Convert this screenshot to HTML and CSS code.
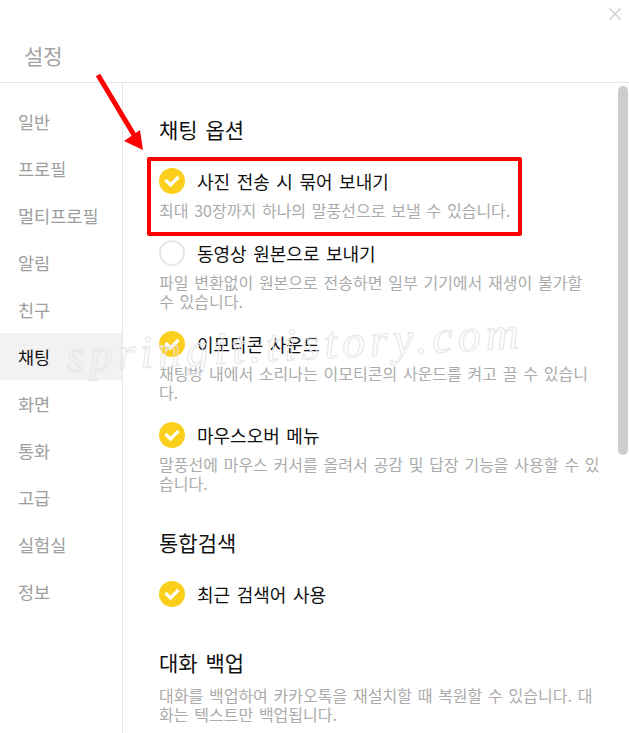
FILE: index.html
```html
<!DOCTYPE html>
<html lang="ko">
<head>
    <meta charset="UTF-8">
    <meta name="viewport" content="width=device-width, initial-scale=1.0">
    <title>설정</title>
    <link rel="stylesheet" href="styles.css">
</head>
<body>
    <div class="window">
        <header class="top-bar">
            <h1 class="title">설정</h1>
            <button class="close-btn" aria-label="닫기">
                <svg width="12" height="12" viewBox="0 0 12 12"><path d="M0.5 0.5L11.5 11.5M11.5 0.5L0.5 11.5" stroke="#c8c8c8" stroke-width="1.2"/></svg>
            </button>
        </header>

        <div class="main">
            <nav class="side-menu">
                <a class="menu-item">일반</a>
                <a class="menu-item">프로필</a>
                <a class="menu-item">멀티프로필</a>
                <a class="menu-item">알림</a>
                <a class="menu-item">친구</a>
                <a class="menu-item active">채팅</a>
                <a class="menu-item">화면</a>
                <a class="menu-item">통화</a>
                <a class="menu-item">고급</a>
                <a class="menu-item">실험실</a>
                <a class="menu-item">정보</a>
            </nav>

            <div class="content">
                <section class="section">
                    <h2 class="section-title">채팅 옵션</h2>

                    <div class="option highlighted">
                        <div class="option-row">
                            <svg class="check" viewBox="0 0 26 26"><circle cx="13" cy="13" r="13" fill="#fccf1d"/><path d="M6.5 12L11.5 17L19.5 9" stroke="#fff" stroke-width="3.2" fill="none"/></svg>
                            <span class="option-label">사진 전송 시 묶어 보내기</span>
                        </div>
                        <p class="option-desc">최대 30장까지 하나의 말풍선으로 보낼 수 있습니다.</p>
                    </div>

                    <div class="option">
                        <div class="option-row">
                            <svg class="check" viewBox="0 0 26 26"><circle cx="13" cy="13" r="12" fill="none" stroke="#e8e8e8" stroke-width="2"/></svg>
                            <span class="option-label">동영상 원본으로 보내기</span>
                        </div>
                        <p class="option-desc">파일 변환없이 원본으로 전송하면 일부 기기에서 재생이 불가할 수 있습니다.</p>
                    </div>

                    <div class="option">
                        <div class="option-row">
                            <svg class="check" viewBox="0 0 26 26"><circle cx="13" cy="13" r="13" fill="#fccf1d"/><path d="M6.5 12L11.5 17L19.5 9" stroke="#fff" stroke-width="3.2" fill="none"/></svg>
                            <span class="option-label">이모티콘 사운드</span>
                        </div>
                        <p class="option-desc">채팅방 내에서 소리나는 이모티콘의 사운드를 켜고 끌 수 있습니다.</p>
                    </div>

                    <div class="option">
                        <div class="option-row">
                            <svg class="check" viewBox="0 0 26 26"><circle cx="13" cy="13" r="13" fill="#fccf1d"/><path d="M6.5 12L11.5 17L19.5 9" stroke="#fff" stroke-width="3.2" fill="none"/></svg>
                            <span class="option-label">마우스오버 메뉴</span>
                        </div>
                        <p class="option-desc">말풍선에 마우스 커서를 올려서 공감 및 답장 기능을 사용할 수 있습니다.</p>
                    </div>
                </section>

                <section class="section">
                    <h2 class="section-title">통합검색</h2>
                    <div class="option">
                        <div class="option-row">
                            <svg class="check" viewBox="0 0 26 26"><circle cx="13" cy="13" r="13" fill="#fccf1d"/><path d="M6.5 12L11.5 17L19.5 9" stroke="#fff" stroke-width="3.2" fill="none"/></svg>
                            <span class="option-label">최근 검색어 사용</span>
                        </div>
                    </div>
                </section>

                <section class="section section-backup">
                    <h2 class="section-title">대화 백업</h2>
                    <p class="section-desc">대화를 백업하여 카카오톡을 재설치할 때 복원할 수 있습니다. 대화는 텍스트만 백업됩니다.</p>
                </section>

                <div class="scroll-thumb"></div>
            </div>
        </div>

        <!-- blog watermark + annotation arrow -->
        <div class="watermark">springit.tistory.com</div>
        <svg class="pointer" width="80" height="100" viewBox="0 0 80 100">
            <line x1="18" y1="15" x2="54" y2="75" stroke="#ff0000" stroke-width="5"/>
            <polygon points="63,90 44,81 60,70" fill="#ff0000"/>
        </svg>
    </div>
</body>
</html>
```

FILE: styles.css
```css
* {
    margin: 0;
    padding: 0;
    box-sizing: border-box;
}

body {
    font-family: "Noto Sans CJK KR", "Noto Sans", sans-serif;
    background: #ffffff;
    color: #1a1a1a;
    width: 629px;
    height: 733px;
    overflow: hidden;
}

.window {
    position: relative;
    height: 733px;
    display: flex;
    flex-direction: column;
}

.top-bar {
    height: 83px;
    border-bottom: 1px solid #e6e6e6;
    display: flex;
    align-items: center;
    padding: 28px 0 0 24px;
}

.title {
    font-size: 21px;
    font-weight: 400;
    color: #a3a3a3;
    line-height: 26px;
}

.close-btn {
    position: absolute;
    top: 8px;
    right: 8px;
    width: 12px;
    height: 12px;
    border: none;
    background: none;
    display: flex;
}

.main {
    flex: 1;
    display: flex;
    min-height: 0;
}

.side-menu {
    width: 123px;
    border-right: 1px solid #e6e6e6;
    padding-top: 15px;
    display: flex;
    flex-direction: column;
}

.menu-item {
    height: 47px;
    display: flex;
    align-items: center;
    padding-left: 18px;
    font-size: 17.5px;
    color: #9e9e9e;
}

.menu-item.active {
    background: #f2f2f2;
    color: #111111;
}

.content {
    position: relative;
    flex: 1;
    padding: 33px 28px 0 36px;
}

.section + .section {
    margin-top: 36px;
}

.section.section-backup {
    margin-top: 42px;
}

.section-title {
    font-size: 21px;
    font-weight: 400;
    line-height: 26px;
    color: #111111;
    word-spacing: 2px;
}

.option {
    margin-top: 20px;
}

.section-title + .option {
    margin-top: 26px;
}

.option-row {
    display: flex;
    align-items: center;
    gap: 12px;
    height: 26px;
}

.check {
    width: 26px;
    height: 26px;
    flex-shrink: 0;
}

.option-label {
    font-size: 18px;
    line-height: 26px;
    color: #111111;
    word-spacing: 1.5px;
}

.option-desc,
.section-desc {
    margin-top: 7px;
    font-size: 16px;
    line-height: 19px;
    color: #ababab;
    word-spacing: 1.3px;
    word-break: break-all;
}

.section-desc {
    margin-top: 11px;
}

.highlighted {
    position: relative;
    width: fit-content;
}

.highlighted::before {
    content: "";
    position: absolute;
    left: -12px;
    top: -11px;
    right: -12px;
    bottom: -16px;
    border: 4px solid #ff0000;
    border-radius: 2px;
}

.scroll-thumb {
    position: absolute;
    top: 3px;
    right: 1px;
    width: 10px;
    height: 369px;
    border-radius: 5px;
    background: #cdcdcd;
}

.watermark {
    position: absolute;
    left: 66px;
    top: 318px;
    font-family: "Liberation Serif", serif;
    font-style: italic;
    font-size: 46px;
    letter-spacing: 5px;
    color: transparent;
    -webkit-text-stroke: 1px #e6e6e6;
    transform: rotate(-3deg);
    pointer-events: none;
}

.pointer {
    position: absolute;
    left: 80px;
    top: 60px;
}
```
